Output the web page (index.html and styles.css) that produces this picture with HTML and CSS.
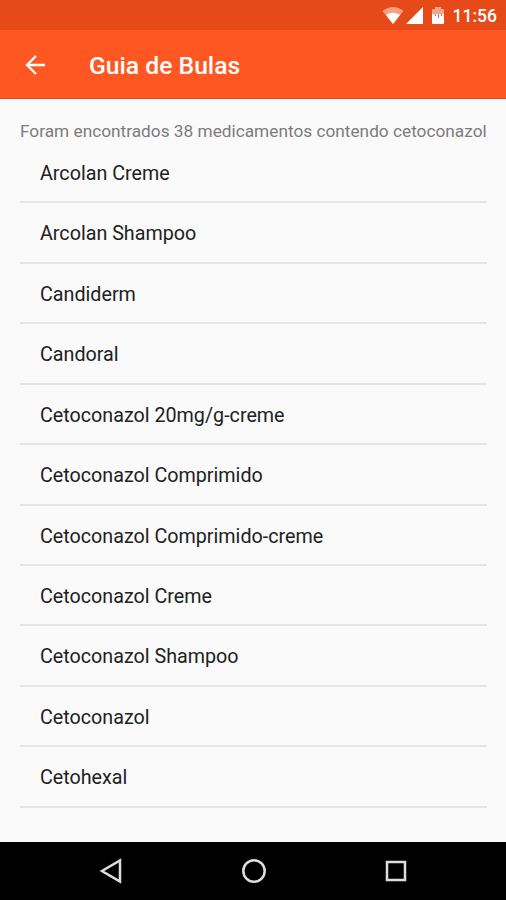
FILE: index.html
```html
<!DOCTYPE html>
<html lang="pt-BR">
<head>
<meta charset="utf-8">
<title>Guia de Bulas</title>
<link rel="stylesheet" href="styles.css">
</head>
<body>
<div class="status">
  <svg class="status-icons" width="66" height="20" viewBox="0 0 66 20">
    <path d="M0.500 5Q11 -3 21.500 5L11 18Z" fill="#f6a083"/>
    <path d="M4 9Q11 4.500 18 9L11 18Z" fill="#fff"/>
    <path d="M41 1V18H24Z" fill="#fff"/>
    <path d="M50 4Q50 3 51 3H53V1H59V3H61Q62 3 62 4V9H50Z" fill="#f4a78d"/>
    <path d="M50 8H62V17Q62 18 61 18H51Q50 18 50 17Z" fill="#fff"/>
    <path d="M53.500 8V10M56.500 8V12M59.500 8V10" stroke="#e9673f" stroke-width="1"/>
  </svg>
  <span class="clock">11:56</span>
</div>
<header class="bar">
  <svg class="back" width="20" height="20" viewBox="0 0 20 20"><path d="M20 10H2M11 1L2 10L11 19" fill="none" stroke="#fff" stroke-width="2.400"/></svg>
  <h1 class="title">Guia de Bulas</h1>
</header>
<main class="content">
  <p class="summary">Foram encontrados 38 medicamentos contendo cetoconazol</p>
  <ul class="list">
    <li>Arcolan Creme</li>
    <li>Arcolan Shampoo</li>
    <li>Candiderm</li>
    <li>Candoral</li>
    <li>Cetoconazol 20mg/g-creme</li>
    <li>Cetoconazol Comprimido</li>
    <li>Cetoconazol Comprimido-creme</li>
    <li>Cetoconazol Creme</li>
    <li>Cetoconazol Shampoo</li>
    <li>Cetoconazol</li>
    <li>Cetohexal</li>
  </ul>
</main>
<nav class="nav">
  <svg width="24" height="26" viewBox="0 0 24 26"><path d="M21 2.500V23.500L3 13Z"/></svg>
  <svg width="26" height="26" viewBox="0 0 26 26"><circle cx="13" cy="13" r="10.700"/></svg>
  <svg width="24" height="26" viewBox="0 0 24 26"><path d="M3 4H21V22H3Z"/></svg>
</nav>
</body>
</html>
```
FILE: styles.css
```css
* { box-sizing: border-box; }
body {
  margin: 0;
  height: 900px;
  display: flex;
  flex-direction: column;
  background: #fafafa;
  font-family: Roboto, sans-serif;
  overflow: hidden;
}
.status {
  height: 30px;
  display: flex;
  align-items: center;
  justify-content: flex-end;
  gap: 5px;
  padding: 2px 9px 0 0;
  background: #e64a19;
  color: #fff;
}
.clock { font-size: 17.500px; font-weight: 500; }
.bar {
  height: 69px;
  display: flex;
  align-items: center;
  padding-left: 25px;
  background: #ff5722;
  border-bottom: 1px solid #e8481a;
  color: #fff;
}
.back { margin-top: 1px; }
.title { margin: 2px 0 0 44px; font-size: 24.700px; font-weight: 500; }
.content { flex: 1; padding: 22px 19px 0 20px; }
.summary {
  margin: 0;
  height: 21.900px;
  line-height: 21px;
  font-size: 17.260px;
  white-space: nowrap;
  color: #7c7c7c;
}
.list { margin: 0; padding: 0; list-style: none; }
.list li {
  height: 60.450px;
  padding: 0 0 0 20px;
  line-height: 62px;
  border-bottom: 2px solid #e5e5e5;
  font-size: 19.720px;
  color: #212121;
}
.nav {
  height: 58px;
  display: flex;
  justify-content: space-between;
  align-items: center;
  padding: 0 98px 0 99px;
  background: #000;
}
.nav svg { fill: none; stroke: #ddd; stroke-width: 2.500; }
```
